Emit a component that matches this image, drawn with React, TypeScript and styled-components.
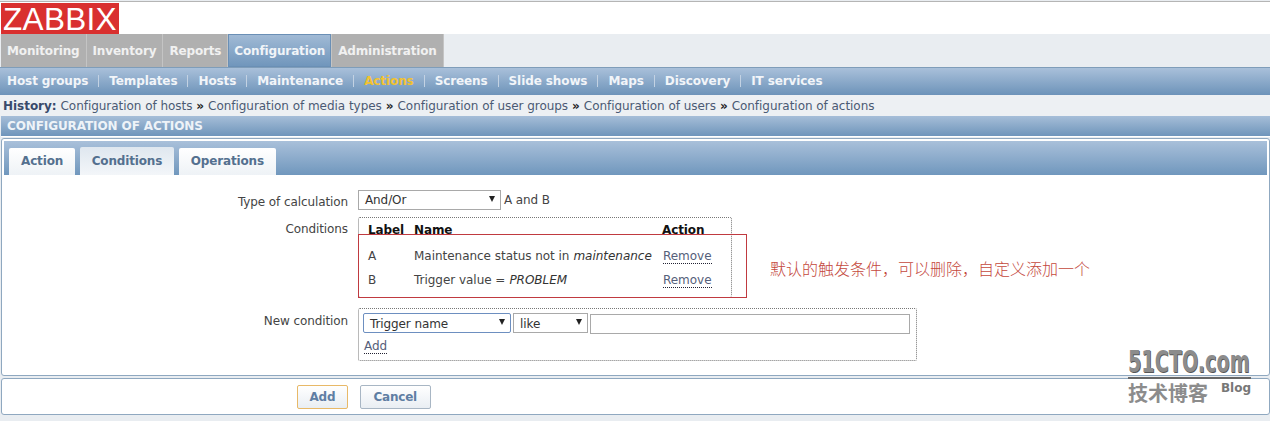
import styled, { createGlobalStyle } from "styled-components";

const GlobalStyle = createGlobalStyle`
  html, body {
    margin: 0;
    padding: 0;
    background: #e9edf1;
    overflow: hidden;
  }
  body {
    font-family: "DejaVu Sans", Verdana, sans-serif;
    font-size: 11.5px;
    color: #333;
  }
`;

const mainTabs = ["Monitoring", "Inventory", "Reports", "Configuration", "Administration"];
const subItems = [
  "Host groups",
  "Templates",
  "Hosts",
  "Maintenance",
  "Actions",
  "Screens",
  "Slide shows",
  "Maps",
  "Discovery",
  "IT services",
];
const history = [
  "Configuration of hosts",
  "Configuration of media types",
  "Configuration of user groups",
  "Configuration of users",
  "Configuration of actions",
];

export default function App() {
  return (
    <>
      <GlobalStyle />
      <Page>
        <Header>
          <Logo>ZABBIX</Logo>
        </Header>
        <MainMenu>
          {mainTabs.map((t) => (
            <MainTab key={t} $active={t === "Configuration"}>
              {t}
            </MainTab>
          ))}
        </MainMenu>
        <SubMenu>
          {subItems.map((s, i) => (
            <SubItem key={s} $active={s === "Actions"} $first={i === 0}>
              {s}
            </SubItem>
          ))}
        </SubMenu>
        <History>
          <b>History:</b>
          {history.map((h, i) => (
            <span key={h}>
              {i > 0 && <Sep>»</Sep>}
              {h}
            </span>
          ))}
        </History>
        <TitleBar>CONFIGURATION OF ACTIONS</TitleBar>
        <Panel>
          <TabStrip>
            <Tab>Action</Tab>
            <Tab $active>Conditions</Tab>
            <Tab>Operations</Tab>
          </TabStrip>
          <Form>
            <FieldLabel $top={5}>Type of calculation</FieldLabel>
            <CalcRow>
              <Select $width={143}>
                And/Or
                <Arrow />
              </Select>
              <span>A and B</span>
            </CalcRow>

            <FieldLabel $top={5}>Conditions</FieldLabel>
            <DottedBox $width={374} $height={80} $below={11} $open>
              <CondTable>
                <HeadCell>Label</HeadCell>
                <HeadCell>Name</HeadCell>
                <HeadCell>Action</HeadCell>
                <CondCell>A</CondCell>
                <CondCell>
                  Maintenance status not in <i>maintenance</i>
                </CondCell>
                <CondCell>
                  <RemoveLink>Remove</RemoveLink>
                </CondCell>
                <CondCell>B</CondCell>
                <CondCell>
                  Trigger value = <i>PROBLEM</i>
                </CondCell>
                <CondCell>
                  <RemoveLink>Remove</RemoveLink>
                </CondCell>
              </CondTable>
            </DottedBox>

            <FieldLabel $top={6}>New condition</FieldLabel>
            <DottedBox $width={559} $height={53} $below={10}>
              <NewRow>
                <Select $width={148} $focused $low>
                  Trigger name
                  <Arrow />
                </Select>
                <Select $width={75} $low>
                  like
                  <Arrow />
                </Select>
                <TextInput />
              </NewRow>
              <AddLink>
                <DotLink>Add</DotLink>
              </AddLink>
            </DottedBox>
          </Form>
        </Panel>
        <Footer>
          <Button $primary>Add</Button>
          <Button>Cancel</Button>
        </Footer>

        <RedFrame />
        <Note>默认的触发条件，可以删除，自定义添加一个</Note>
        <Watermark>
          <WatermarkName>51CTO.com</WatermarkName>
          <WatermarkRule />
          <WatermarkFoot>
            <span>技术博客</span>
            <small>Blog</small>
          </WatermarkFoot>
        </Watermark>
      </Page>
    </>
  );
}

const Page = styled.div`
  position: relative;
  box-sizing: border-box;
  width: 1270px;
  height: 421px;
  padding-top: 1px;
  overflow: hidden;
`;

const Header = styled.div`
  height: 31px;
  padding-top: 1px;
  background: #fff;
  border-top: 1px solid #b5b5b5;
`;

const Logo = styled.div`
  width: 118px;
  height: 31px;
  margin-left: 1px;
  background: #d9302f;
  color: #fff;
  font-family: "Liberation Sans", Arial, sans-serif;
  font-size: 31.5px;
  line-height: 32px;
  letter-spacing: 0.3px;
  text-align: center;
  white-space: nowrap;
`;

const MainMenu = styled.div`
  display: flex;
  height: 33px;
  padding-left: 1px;
  background: #e9edf1;
`;

const MainTab = styled.div<{ $active?: boolean }>`
  display: flex;
  align-items: center;
  padding: 0 6px;
  color: ${(p) => (p.$active ? "#f0f4f8" : "#f1f1f1")};
  font-weight: bold;
  font-size: 12px;
  letter-spacing: -0.15px;
  background: ${(p) => (p.$active ? "linear-gradient(#a2bbd6, #6f95bb)" : "#b0b0b0")};
  border-right: 1px solid #c4c4c4;
  ${(p) => p.$active && "box-shadow: inset 0 0 0 1px #6a8fb5;"}
`;

const SubMenu = styled.div`
  display: flex;
  align-items: center;
  height: 28px;
  padding: 0 0 2px 7px;
  background: linear-gradient(#a9c0da, #6d93b9);
  border-top: 1px solid #7f9db9;
  box-sizing: border-box;
`;

const SubItem = styled.div<{ $active?: boolean; $first?: boolean }>`
  color: ${(p) => (p.$active ? "#f2c230" : "#f2f5f9")};
  font-weight: bold;
  font-size: 12px;
  letter-spacing: -0.1px;
  ${(p) =>
    !p.$first &&
    `
    margin-left: 10px;
    padding-left: 11px;
    background: linear-gradient(#c3d2e3, #c3d2e3) no-repeat left center / 1px 12px;
  `}
`;

const History = styled.div`
  display: flex;
  align-items: center;
  gap: 4px;
  height: 21px;
  padding-left: 3px;
  color: #4b5a74;
  font-size: 12px;
  letter-spacing: -0.04px;
  background: #edf0f3;

  b {
    color: #384a6b;
  }
`;

const Sep = styled.span`
  margin-right: 4px;
  color: #222;
  font-weight: bold;
`;

const TitleBar = styled.div`
  height: 20px;
  margin-left: 1px;
  padding-left: 6px;
  color: #eef3f8;
  font-size: 12px;
  font-weight: bold;
  line-height: 20px;
  letter-spacing: -0.1px;
  background: linear-gradient(#a6bed8, #6f95bb);
  border-bottom: 1px solid #fff;
`;

const Panel = styled.div`
  box-sizing: border-box;
  height: 238px;
  margin: 1px 0 0 1px;
  padding: 2px;
  background: #fff;
  border: 1px solid #8fa8c0;
  border-radius: 3px;
`;

const TabStrip = styled.div`
  display: flex;
  align-items: flex-end;
  gap: 4.5px;
  height: 34px;
  padding-left: 5px;
  background: linear-gradient(#a9c0da, #7097bd);
`;

const Tab = styled.div<{ $active?: boolean }>`
  display: flex;
  align-items: center;
  height: ${(p) => (p.$active ? 28 : 27)}px;
  padding: 0 12px 1px;
  box-sizing: border-box;
  color: #54708f;
  font-size: 12px;
  font-weight: bold;
  letter-spacing: -0.15px;
  background: ${(p) => (p.$active ? "linear-gradient(#dfe7ef, #f3f6f9)" : "linear-gradient(#fff, #eef2f6)")};
  border-radius: 2px 2px 0 0;
`;

const Form = styled.div`
  display: grid;
  grid-template-columns: 344px auto;
  column-gap: 10px;
  justify-content: start;
  padding-top: 15px;
`;

const FieldLabel = styled.div<{ $top: number }>`
  padding-top: ${(p) => p.$top}px;
  color: #444;
  text-align: right;
  font-size: 12px;
  letter-spacing: -0.1px;
`;

const CalcRow = styled.div`
  display: flex;
  align-items: center;
  gap: 3px;
  height: 19px;
  margin-bottom: 8px;
  color: #444;
  font-size: 12px;
  letter-spacing: -0.1px;
`;

const Select = styled.div<{ $width: number; $focused?: boolean; $low?: boolean }>`
  position: relative;
  box-sizing: border-box;
  width: ${(p) => p.$width}px;
  height: 20px;
  padding-left: 6px;
  color: #333;
  font-size: 12px;
  line-height: ${(p) => (p.$low ? 21 : 19)}px;
  letter-spacing: -0.1px;
  overflow: hidden;
  background: #fff;
  border: 1px solid ${(p) => (p.$focused ? "#6d8fc0" : "#a9a9a9")};
  border-radius: ${(p) => (p.$focused ? "2px" : "0")};
`;

const Arrow = styled.span`
  position: absolute;
  top: 5px;
  right: 5px;
  width: 0;
  height: 0;
  border-top: 6px solid #222;
  border-left: 3px solid transparent;
  border-right: 3px solid transparent;
`;

const DottedBox = styled.div<{ $width: number; $height: number; $below: number; $open?: boolean }>`
  box-sizing: border-box;
  width: ${(p) => p.$width}px;
  height: ${(p) => p.$height}px;
  margin-bottom: ${(p) => p.$below}px;
  border: 1px dotted #777;
  ${(p) => p.$open && "border-bottom: 0;"}
  border-radius: 2px;
`;

const CondTable = styled.div`
  display: grid;
  grid-template-columns: 46px 248px auto;
  grid-auto-rows: 24px;
  padding: 3px 0 0 9px;
  color: #444;
  font-size: 12px;
  letter-spacing: -0.03px;
`;

const HeadCell = styled.div`
  padding-top: 2px;
  height: 23px;
  color: #111;
  font-weight: bold;
  letter-spacing: -0.1px;
`;

const CondCell = styled.div`
  display: flex;
  align-items: center;
  gap: 4px;
  padding-bottom: 2px;

  i {
    color: #333;
  }
`;

const DotLink = styled.span`
  color: #55607a;
  border-bottom: 1px dotted #223;
  line-height: 14px;
`;

const RemoveLink = styled(DotLink)`
  margin-left: 1px;
`;

const NewRow = styled.div`
  display: flex;
  align-items: flex-start;
  gap: 2px;
  padding: 4px 0 0 4px;
`;

const TextInput = styled.input`
  box-sizing: border-box;
  width: 320px;
  height: 20px;
  margin: 1px 0 0;
  padding: 0;
  background: #fff;
  border: 1px solid #a9a9a9;
`;

const AddLink = styled.div`
  padding: 5px 0 0 5px;
  color: #55607a;
  font-size: 12px;
`;

const Footer = styled.div`
  display: flex;
  align-items: center;
  gap: 12px;
  box-sizing: border-box;
  height: 37px;
  margin: 2px 0 0 1px;
  padding: 0 0 0 295px;
  background: #fff;
  border: 1px solid #8fa8c0;
  border-radius: 3px;
`;

const Button = styled.button<{ $primary?: boolean }>`
  box-sizing: border-box;
  height: 24px;
  padding: 0 ${(p) => (p.$primary ? 11.5 : 12.5)}px;
  color: #5f7ea3;
  font-family: "DejaVu Sans", Verdana, sans-serif;
  font-size: 12px;
  font-weight: bold;
  letter-spacing: -0.2px;
  background: linear-gradient(#fff, #e9eef3);
  border: 1px solid ${(p) => (p.$primary ? "#e8b968" : "#a8b6c4")};
  border-radius: 2px;
`;

const RedFrame = styled.div`
  position: absolute;
  left: 358px;
  top: 234px;
  box-sizing: border-box;
  width: 389px;
  height: 64px;
  border: 1px solid #c03a40;
  background: transparent;
`;

const Note = styled.div`
  position: absolute;
  left: 770px;
  top: 258px;
  color: #c4483c;
  font-family: "Noto Sans CJK SC", sans-serif;
  font-size: 16px;
  font-weight: 300;
  line-height: 20px;
  white-space: nowrap;
`;

const Watermark = styled.div`
  position: absolute;
  left: 1128px;
  top: 347px;
  width: 123px;
  color: #8c8c8c;
`;

const WatermarkName = styled.div`
  font-family: "DejaVu Sans", sans-serif;
  font-size: 30px;
  font-weight: bold;
  line-height: 30px;
  white-space: nowrap;
  text-shadow: 1px 1px 0 #555;
  transform: scaleX(0.64);
  transform-origin: left;
`;

const WatermarkRule = styled.div`
  height: 2px;
  background: #666;
`;

const WatermarkFoot = styled.div`
  display: flex;
  justify-content: space-between;
  padding-top: 2px;
  font-family: "Noto Sans CJK SC", sans-serif;
  font-size: 20px;
  font-weight: bold;
  line-height: 24px;

  small {
    margin-top: -5px;
    color: #777;
    font-family: "DejaVu Sans", sans-serif;
    font-size: 12px;
    font-weight: bold;
  }
`;
